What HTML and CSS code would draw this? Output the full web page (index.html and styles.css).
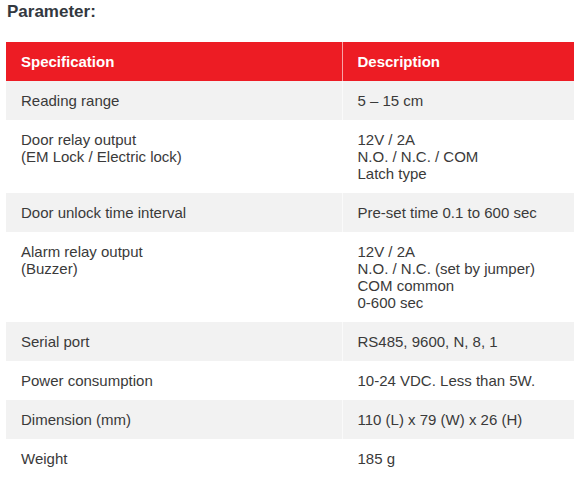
FILE: index.html
```html
<!DOCTYPE html>
<html>
<head>
<meta charset="utf-8">
<link rel="stylesheet" href="styles.css">
</head>
<body>
<div class="page">
  <h2 class="title">Parameter:</h2>
  <table class="spec">
    <thead>
      <tr><th>Specification</th><th>Description</th></tr>
    </thead>
    <tbody>
      <tr class="alt"><td>Reading range</td><td>5 – 15 cm</td></tr>
      <tr><td>Door relay output<br>(EM Lock / Electric lock)</td><td>12V / 2A<br>N.O. / N.C. / COM<br>Latch type</td></tr>
      <tr class="alt"><td>Door unlock time interval</td><td>Pre-set time 0.1 to 600 sec</td></tr>
      <tr><td>Alarm relay output<br>(Buzzer)</td><td>12V / 2A<br>N.O. / N.C. (set by jumper)<br>COM common<br>0-600 sec</td></tr>
      <tr class="alt"><td>Serial port</td><td>RS485, 9600, N, 8, 1</td></tr>
      <tr><td>Power consumption</td><td>10-24 VDC. Less than 5W.</td></tr>
      <tr class="alt"><td>Dimension (mm)</td><td>110 (L) x 79 (W) x 26 (H)</td></tr>
      <tr><td>Weight</td><td>185 g</td></tr>
    </tbody>
  </table>
</div>
</body>
</html>
```
FILE: styles.css
```css
html, body {
  margin: 0;
  padding: 0;
  background: #fff;
}
.page {
  padding: 2px 0 0 6px;
  font-family: "Liberation Sans", Arial, sans-serif;
  color: #333;
}
.title {
  margin: 0 0 20px 1px;
  font-size: 17px;
  line-height: 20px;
  font-weight: bold;
  color: #333840;
}
.spec {
  width: 568px;
  border-collapse: collapse;
  table-layout: fixed;
  font-size: 15px;
  line-height: 17px;
}
.spec th, .spec td {
  text-align: left;
  vertical-align: top;
  padding: 11px 15px;
}
.spec th:first-child, .spec td:first-child {
  width: 336px;
  box-sizing: border-box;
  border-right: 1px solid rgba(255, 255, 255, 0.6);
}
.spec th {
  background: #ed1c24;
  color: #fff;
  font-weight: bold;
}
.spec td {
  color: #3a3a3a;
}
.spec tr.alt td {
  background: #f2f2f2;
}
```
